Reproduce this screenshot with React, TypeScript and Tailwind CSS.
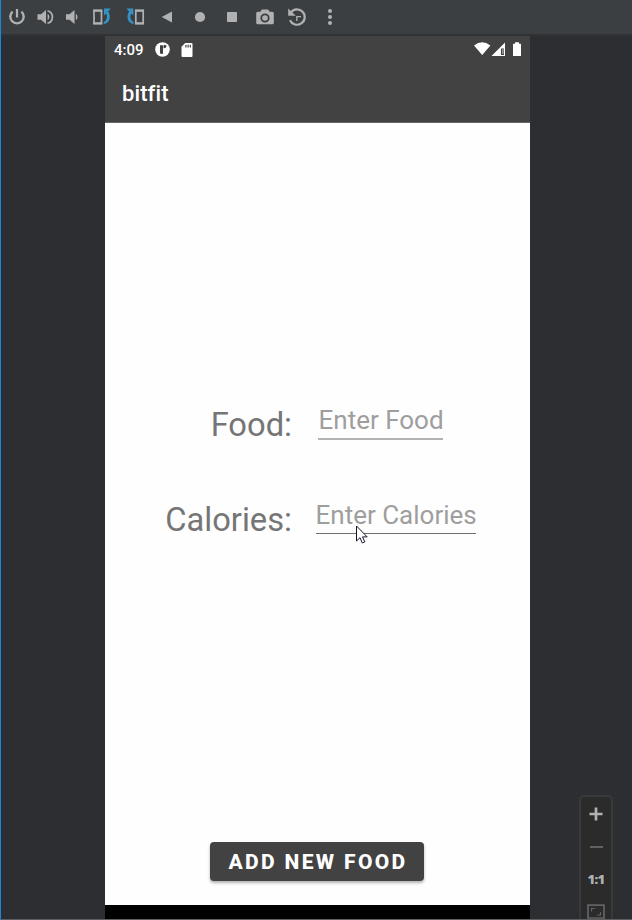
import type { ReactNode } from "react";

function Icon({ className = "", children }: { className?: string; children: ReactNode }) {
  return (
    <svg viewBox="0 0 24 24" className={`h-6 w-6 shrink-0 ${className}`} fill="#afb1b3">
      {children}
    </svg>
  );
}

const ARROW = "M3.500 3.600H10.300V10.400L8.300 8.600C7.300 10.400 7.200 11.500 7.500 13c.4 1.900 1.200 3 3 3.900V19.200c-3.600-.9-5.500-3-5.900-5.900-.3-2.500.1-4.500 1.500-6.800z";

function Toolbar() {
  return (
    <header className="flex h-[36px] shrink-0 items-start border-b-2 border-[#303234] bg-[#3c3f41] pl-1 pt-[5px]">
      <Icon>
        <path d="M7.600 6.600A6.700 6.700 0 1 0 16.400 6.600" fill="none" stroke="#afb1b3" strokeWidth="2.400" />
        <path d="M10.900 4h2.200v8.500h-2.200z" />
      </Icon>
      <Icon className="ml-1">
        <path d="M4.500 9.300H8L13 5v14l-5-4.300H4.500z" />
        <path d="M14.600 8.800a3.800 3.800 0 0 1 0 6.400z" />
        <path d="M14.500 5.700a6.500 6.500 0 0 1 0 12.600" fill="none" stroke="#afb1b3" strokeWidth="1.700" />
      </Icon>
      <Icon className="ml-[3px]">
        <path d="M6 9.300H9.500L14.500 5v14l-5-4.300H6z" />
        <path d="M15.800 8.800a3.800 3.800 0 0 1 0 6.400z" />
      </Icon>
      <Icon className="ml-[6px]">
        <path d="M4 5.500h7.500v13H4z" fill="none" stroke="#afb1b3" strokeWidth="1.700" />
        <path d="M3.200 4.600h9.100v2.100H3.200zM3.200 17.300h9.100v2.100H3.200z" />
        <path d={ARROW} fill="#3592c4" transform="translate(24.300) scale(-1 1)" />
      </Icon>
      <Icon className="ml-[9px]">
        <path d={ARROW} fill="#3592c4" />
        <path d="M12.800 5.500h7.400v13h-7.400z" fill="none" stroke="#afb1b3" strokeWidth="1.700" />
        <path d="M12 4.600h9v2.100h-9zM12 17.300h9v2.100h-9z" />
      </Icon>
      <Icon className="ml-2"><path d="M6.700 12 17 6.500v11z" /></Icon>
      <Icon className="ml-[9px]"><circle cx="12" cy="12" r="5.100" /></Icon>
      <Icon className="ml-2"><rect x="7" y="7" width="10" height="10" rx=".7" /></Icon>
      <Icon className="ml-[9px]">
        <path fillRule="evenodd" d="M8.800 4.500h6.400l1.300 2.300h2.700q1.600 0 1.600 1.500v9.500q0 1.500-1.600 1.500H4.800q-1.600 0-1.600-1.500V8.300q0-1.500 1.600-1.500h2.700zM12 8.400a4.600 4.600 0 1 0 0 9.200 4.600 4.600 0 0 0 0-9.200z" />
        <circle cx="12" cy="13" r="2.800" />
      </Icon>
      <Icon className="ml-2">
        <path d="M5.800 7.500A7.700 7.700 0 1 1 5 15.200" fill="none" stroke="#afb1b3" strokeWidth="2.200" />
        <path d="M3.200 3.600v7.200h7.600z" />
        <path d="M11.800 16v-4.300H16" fill="none" stroke="#afb1b3" strokeWidth="1.300" />
      </Icon>
      <Icon className="ml-[9px]">
        <circle cx="12" cy="6.100" r="2" /><circle cx="12" cy="12.100" r="2" /><circle cx="12" cy="18.100" r="2" />
      </Icon>
    </header>
  );
}

function StatusBar() {
  return (
    <div className="flex h-[27px] items-center pl-[9px] pr-[7px] text-white">
      <span className="w-[41px] pt-px text-[15px] font-medium leading-none">4:09</span>
      <svg viewBox="0 0 15 15" className="h-[15px] w-[15px]">
        <circle cx="7.500" cy="7.500" r="7.300" fill="#fff" />
        <path d="M5 3.300h3v8.200q-2.400 1.300-3-.7z" fill="#424242" />
        <path d="M8.500 4.500a1.500 1.500 0 1 1 2.800.6Q10 6.500 8.500 6.300z" fill="#424242" />
      </svg>
      <svg viewBox="0 0 12 14" className="ml-[11px] h-[14px] w-[12px]">
        <path d="M4.200 0H10.500Q11.500 0 11.500 1v12q0 1-1 1h-9q-1 0-1-1V3.800z" fill="#fff" />
        <path d="M4.300 1.800h1.200v2.600H4.300zM6.500 1.800h1.200v2.600H6.500zM8.700 1.800h1.200v2.600H8.700z" fill="#424242" />
      </svg>
      <svg viewBox="0 0 49 15" className="ml-auto h-[15px] w-[49px]" fill="#fff">
        <path d="M0 3.500Q8.200-3 16.400 3.500L8.200 13z" />
        <path fillRule="evenodd" d="M17.500 14 31 .5V14zM27 6.500V13h3V6.500z" />
        <path d="M28.200 6.500h1.300V12h-1.300z" fill="#aaa" />
        <path d="M41 .2h4v1.600h1.500q.5 0 .5.500v11.200q0 .5-.5.500h-7q-.5 0-.5-.5V2.300q0-.5.500-.5H41z" />
      </svg>
    </div>
  );
}

function Phone() {
  return (
    <main className="flex w-[425px] flex-col bg-[#fefefe]">
      <div className="h-[87px] shrink-0 border-b border-[#666] bg-[#424242]">
        <StatusBar />
        <h1 className="pl-[17px] pt-[16px] text-[22px] font-medium leading-[30px] tracking-[0.100px] text-white">bitfit</h1>
      </div>
      <form className="flex flex-1 flex-col pt-[278px]">
        <div className="flex h-[95px]">
          <label className="w-[187px] pt-[5px] text-right text-[32.700px] leading-[39px] text-[#757575]">Food:</label>
          <div className="ml-[26px] h-[39px] w-[125px] whitespace-nowrap border-b-2 border-[#b2b2b2] pl-[0.500px] text-[26px] leading-[38px] text-[#9e9e9e]">Enter Food</div>
        </div>
        <div className="relative flex h-[95px]">
          <label className="w-[187px] pt-[5px] text-right text-[32.700px] leading-[39px] text-[#757575]">Calories:</label>
          <div className="ml-[24px] h-[38px] w-[160px] whitespace-nowrap border-b border-[#707070] text-[26px] leading-[38px] text-[#9e9e9e]"><span className="-ml-[0.500px]">Enter Calories</span></div>
          <svg viewBox="0 0 12 19" className="absolute left-[251px] top-[29px] h-[19px] w-[12px]">
            <path d="M.5 1v15l3.500-3.300L6.300 18l2.500-1.100-2.300-5h4.700z" fill="#fff" stroke="#17172b" />
          </svg>
        </div>
        <button type="button" className="mb-[24px] ml-[105px] mt-auto h-[39px] w-[214px] whitespace-nowrap rounded-[4px] bg-[#424242] pl-[2px] pt-[3px] text-[21px] font-extrabold tracking-[2.350px] text-white shadow-[0_2px_3px_rgba(0,0,0,0.3)]">
          ADD NEW FOOD
        </button>
      </form>
      <div className="h-[14px] shrink-0 bg-black" />
    </main>
  );
}

function ZoomControls() {
  return (
    <aside className="ml-[49px] mt-auto flex h-[124px] w-[34px] flex-col items-center rounded-t-[5px] border-2 border-b-0 border-[#38393a] bg-[#2b2b2b]">
      <svg viewBox="0 0 14 14" className="mt-[10px] h-[14px] w-[14px]"><path d="M7 .5v13M.5 7h13" stroke="#afb1b3" strokeWidth="2.700" /></svg>
      <div className="mt-[25px] h-[2px] w-[13px] bg-[#606162]" />
      <span className="mt-[24px] font-['Open_Sans',sans-serif] text-[13px] font-extrabold leading-[14px] tracking-[-0.600px] text-[#afb1b3]">1:1</span>
      <svg viewBox="0 0 18 15" className="mt-auto h-[15px] w-[18px]" fill="none" stroke="#626364">
        <path d="M1 15V1.200h16V15M1 14h16" strokeWidth="1.700" />
        <path d="M4.500 7.500V4.500H8M10 11h3.500V8" strokeWidth="1.200" />
      </svg>
    </aside>
  );
}

export default function App() {
  return (
    <div className="flex h-[920px] w-[632px] flex-col overflow-hidden border-b border-l border-b-[#5d5e60] border-l-[#1787e0] bg-[#2d2e32] font-[Roboto,sans-serif]">
      <Toolbar />
      <div className="flex min-h-0 flex-1 pl-[104px]">
        <Phone />
        <ZoomControls />
      </div>
    </div>
  );
}
